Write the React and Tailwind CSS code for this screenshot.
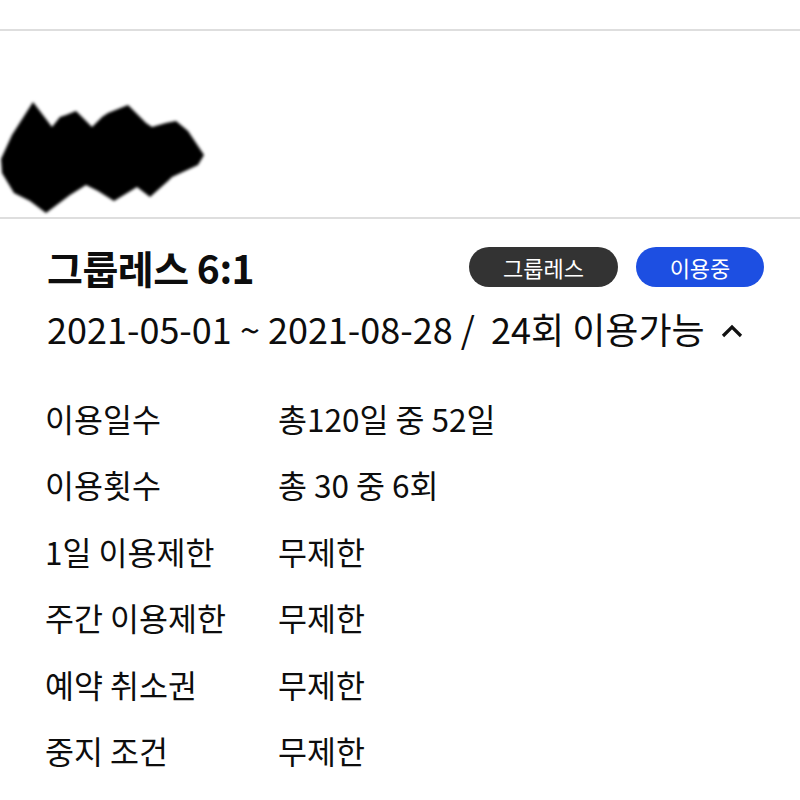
import React from 'react';

const rows = [
  { label: '이용일수', value: '총120일 중 52일' },
  { label: '이용횟수', value: '총 30 중 6회' },
  { label: '1일 이용제한', value: '무제한' },
  { label: '주간 이용제한', value: '무제한' },
  { label: '예약 취소권', value: '무제한' },
  { label: '중지 조건', value: '무제한' },
];

// redacted scribble over the member name
const Scribble = () => (
  <svg width="210" height="120" viewBox="0 0 210 120" className="block">
    <defs>
      <filter id="soft" x="-10%" y="-10%" width="120%" height="120%">
        <feGaussianBlur stdDeviation="1.4" />
      </filter>
    </defs>
    <polygon
      filter="url(#soft)"
      fill="#000"
      points="1,62 12,38 33,5 52,30 60,20 66,18 76,14 92,30 102,20 108,16 128,8 146,26 152,30 166,26 176,24 188,34 204,58 198,68 172,80 168,84 150,100 137,90 114,104 98,94 86,88 70,98 46,116 30,104 14,96 2,76"
    />
  </svg>
);

const App = () => {
  return (
    <div className="w-[800px] h-[800px] bg-white overflow-hidden text-[#0d0d0d] font-['Noto_Sans_CJK_KR','Noto_Sans',sans-serif]">
      <div className="h-[29px]" />
      <div className="h-[2px] bg-[#dedede]" />
      <div className="h-[186px] flex items-end">
        <Scribble />
      </div>
      <div className="h-[2px] bg-[#dedede]" />

      <div className="pl-[47px] pr-[36px] pt-[27px]">
        <div className="flex items-center justify-between h-[42px]">
          <h2 className="text-[39px] font-bold leading-none tracking-[-0.5px]">그룹레스 6:1</h2>
          <div className="flex gap-[18px]">
            <span className="w-[149px] h-[40px] rounded-full bg-[#333333] text-white text-[22px] flex items-center justify-center">그룹레스</span>
            <span className="w-[128px] h-[40px] rounded-full bg-[#1d4fe2] text-white text-[22px] flex items-center justify-center">이용중</span>
          </div>
        </div>

        <div className="mt-[22px] flex items-center text-[36px] leading-none">
          <span>2021-05-01 ~ 2021-08-28 /&nbsp; 24회 이용가능</span>
          <svg width="24" height="16" viewBox="0 0 24 16" className="ml-[15px] mt-[6px]">
            <polyline points="3,13 12,4 21,13" fill="none" stroke="#111" strokeWidth="3.2" />
          </svg>
        </div>

        <div className="mt-[39px] -ml-[2px] flex flex-col">
          {rows.map(row => (
            <div key={row.label} className="flex items-center h-[66.5px] text-[31.5px] leading-none">
              <span className="w-[233px] shrink-0">{row.label}</span>
              <span>{row.value}</span>
            </div>
          ))}
        </div>
      </div>
    </div>
  );
};

export default App;
